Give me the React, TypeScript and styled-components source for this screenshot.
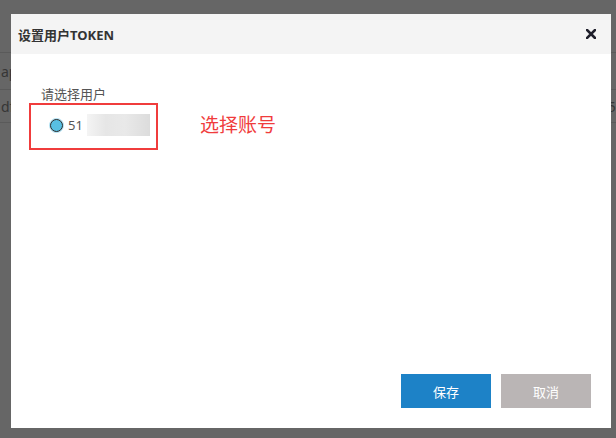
import React from 'react';
import styled, { createGlobalStyle } from 'styled-components';

const GlobalStyle = createGlobalStyle`
  html, body {
    margin: 0;
    padding: 0;
    width: 616px;
    height: 438px;
    overflow: hidden;
    font-family: "Noto Sans", "Noto Sans CJK SC", sans-serif;
  }
`;

const Page = styled.div`
  position: relative;
  width: 616px;
  height: 438px;
  background: #fff;
  overflow: hidden;
`;

const Table = styled.div`
  display: flex;
  flex-direction: column;
  padding-top: 52px;
`;

const TableRow = styled.div<{ h: number }>`
  height: ${({ h }) => h}px;
  border-top: 1px solid #e2e2e2;
  display: flex;
  align-items: center;
  justify-content: space-between;
  font-size: 14px;
  color: #888;
  padding: 0 0 0 1px;
  box-sizing: border-box;
`;

const RowTail = styled.span`
  margin-right: -4px;
`;

const Mask = styled.div`
  position: absolute;
  inset: 0;
  background: rgba(0, 0, 0, 0.6);
`;

const Dialog = styled.div`
  position: absolute;
  left: 11px;
  top: 14px;
  width: 600px;
  height: 414px;
  background: #fff;
  display: flex;
  flex-direction: column;
`;

const Header = styled.div`
  height: 40px;
  background: #f4f4f4;
  display: flex;
  align-items: center;
  justify-content: space-between;
  padding: 0 15px 0 7px;
`;

const Title = styled.div`
  font-size: 13px;
  font-weight: 700;
  color: #333;
`;

const CloseButton = styled.button`
  border: none;
  background: none;
  padding: 0;
  width: 10px;
  height: 10px;
  display: flex;
  cursor: pointer;
`;

const Body = styled.div`
  flex: 1;
  padding: 32px 18px 0;
`;

const FieldLabel = styled.div`
  font-size: 13px;
  color: #555;
  line-height: 16px;
  margin: 0 0 1px 12px;
`;

const AnnotatedRow = styled.div`
  display: flex;
  align-items: center;
`;

const HighlightBox = styled.div`
  width: 129px;
  height: 47px;
  box-sizing: border-box;
  border: 2px solid #f03c3c;
  display: flex;
  align-items: center;
  padding: 0 0 3px 19px;
`;

const RadioDot = styled.span`
  width: 13px;
  height: 13px;
  flex-shrink: 0;
  box-sizing: border-box;
  border-radius: 50%;
  border: 1px solid #2b2b2b;
  background: #58bfe2;
  box-shadow: 0 0 0 1px #b5e2f3;
`;

const OptionText = styled.span`
  font-size: 13px;
  color: #555;
  margin-left: 5px;
`;

const Blurred = styled.span`
  width: 63px;
  height: 22px;
  margin-left: 4px;
  background: linear-gradient(90deg, #f4f4f4 0%, #e6e6e6 30%, #e9e9e9 60%, #dcdcdc 100%);
  filter: blur(0.6px);
`;

const Annotation = styled.span`
  margin-left: 42px;
  margin-bottom: 6px;
  font-size: 19px;
  color: #f03c3c;
`;

const Footer = styled.div`
  display: flex;
  justify-content: flex-end;
  gap: 10px;
  padding: 0 20px 20px 0;
`;

const Button = styled.button<{ variant: 'primary' | 'muted' }>`
  width: 90px;
  height: 34px;
  border: none;
  font-family: inherit;
  font-size: 13px;
  color: #fff;
  background: ${({ variant }) => (variant === 'primary' ? '#1d82c7' : '#bab5b5')};
  cursor: pointer;
`;

const CloseIcon = () => (
  <svg width="10" height="10" viewBox="0 0 10 10">
    <path d="M1 1 L9 9 M9 1 L1 9" stroke="#1f1f2b" strokeWidth="2.6" strokeLinecap="square" />
  </svg>
);

const App: React.FC = () => (
  <>
    <GlobalStyle />
    <Page>
      <Table>
        <TableRow h={37}>
          <span>ap</span>
          <RowTail />
        </TableRow>
        <TableRow h={33}>
          <span>df</span>
          <RowTail>5(</RowTail>
        </TableRow>
        <TableRow h={40}>
          <span />
        </TableRow>
      </Table>
      <Mask />
      <Dialog>
        <Header>
          <Title>设置用户TOKEN</Title>
          <CloseButton aria-label="close">
            <CloseIcon />
          </CloseButton>
        </Header>
        <Body>
          <FieldLabel>请选择用户</FieldLabel>
          <AnnotatedRow>
            <HighlightBox>
              <RadioDot />
              <OptionText>51</OptionText>
              <Blurred />
            </HighlightBox>
            <Annotation>选择账号</Annotation>
          </AnnotatedRow>
        </Body>
        <Footer>
          <Button variant="primary">保存</Button>
          <Button variant="muted">取消</Button>
        </Footer>
      </Dialog>
    </Page>
  </>
);

export default App;
